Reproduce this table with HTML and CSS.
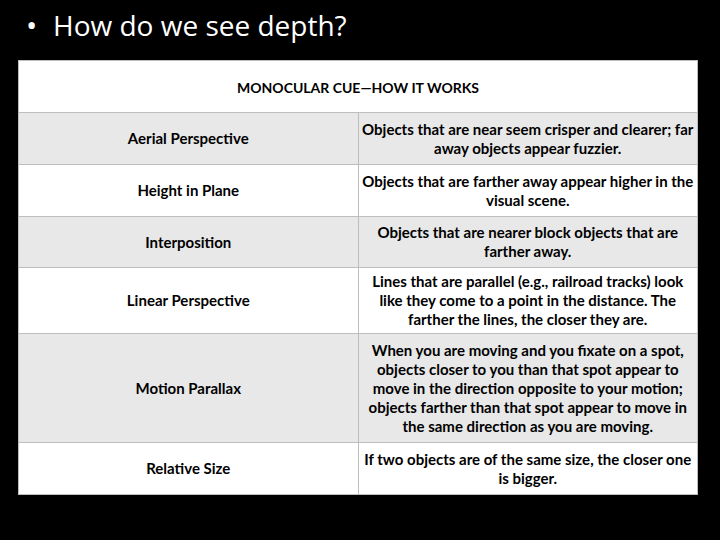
FILE: index.html
```html
<!DOCTYPE html>
<html>
<head>
<meta charset="utf-8">
<link rel="stylesheet" href="styles.css">
</head>
<body>
<div class="slide">
  <h1 class="title"><span class="bullet">•</span>How do we see depth?</h1>
  <table class="cues">
    <tr class="head"><td colspan="2">MONOCULAR CUE—HOW IT WORKS</td></tr>
    <tr class="r1 alt"><td>Aerial Perspective</td><td>Objects that are near seem crisper and clearer; far away objects appear fuzzier.</td></tr>
    <tr class="r2"><td>Height in Plane</td><td>Objects that are farther away appear higher in the visual scene.</td></tr>
    <tr class="r3 alt"><td>Interposition</td><td>Objects that are nearer block objects that are farther away.</td></tr>
    <tr class="r4"><td>Linear Perspective</td><td>Lines that are parallel (e.g., railroad tracks) look like they come to a point in the distance. The farther the lines, the closer they are.</td></tr>
    <tr class="r5 alt"><td>Motion Parallax</td><td>When you are moving and you fixate on a spot, objects closer to you than that spot appear to move in the direction opposite to your motion; objects farther than that spot appear to move in the same direction as you are moving.</td></tr>
    <tr class="r6"><td>Relative Size</td><td>If two objects are of the same size, the closer one is bigger.</td></tr>
  </table>
</div>
</body>
</html>
```
FILE: styles.css
```css
html, body {
  margin: 0;
  padding: 0;
  background: #000;
}
.slide {
  width: 720px;
  height: 540px;
  background: #000;
  padding: 0 0 0 18px;
  box-sizing: border-box;
}
.title {
  margin: 0;
  padding: 6px 0 0 8px;
  height: 54px;
  box-sizing: border-box;
  font-family: "Open Sans", "Lato", sans-serif;
  font-weight: 400;
  font-size: 28px;
  line-height: 38px;
  color: #fff;
  display: flex;
}
.bullet {
  width: 27px;
  font-size: 30px;
}
.cues {
  margin-top: 6px;
  border-collapse: collapse;
  width: 680px;
  table-layout: fixed;
  font-family: "Lato", "Open Sans", sans-serif;
  font-weight: 700;
  font-size: 15px;
  line-height: 19px;
  color: #000;
}
.cues td {
  border: 1px solid #bdbdbd;
  text-align: center;
  vertical-align: middle;
  padding: 0 3px;
  background: #fff;
  width: 50%;
}
.cues .alt td {
  background: #e8e8e8;
}
.head td {
  height: 49px;
  font-size: 14px;
  padding-top: 2px;
}
.r1 td { height: 51px; }
.r2 td { height: 51px; }
.r3 td { height: 50px; }
.r4 td { height: 65px; }
.r5 td { height: 108px; }
.r6 td { height: 51px; }
```
